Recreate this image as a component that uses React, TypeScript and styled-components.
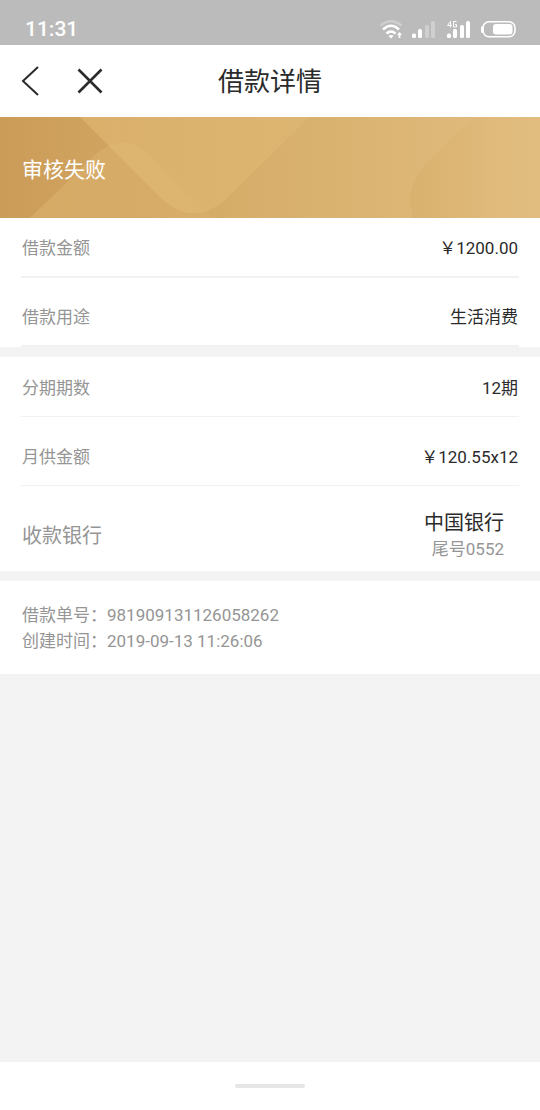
import React from 'react';
import styled, { createGlobalStyle } from 'styled-components';

const GlobalStyle = createGlobalStyle`
  * { box-sizing: border-box; }
  html, body, #root { height: 100%; }
  body {
    margin: 0;
    background: #f3f3f3;
    color: #2b2b2b;
    font-family: Roboto, "Noto Sans CJK SC", sans-serif;
    font-size: 17px;
    font-weight: 380;
    line-height: 26px;
  }
`;

const Screen = styled.div`
  min-height: 100%;
  display: flex;
  flex-direction: column;
`;

const StatusBar = styled.div`
  display: flex;
  align-items: center;
  justify-content: space-between;
  height: 45px;
  padding: 12px 24px 0 25px;
  background: #bbb;
  color: #fff;
  font-size: 21px;
  font-weight: 500;
`;

const StatusIcons = styled.svg`
  display: block;
`;

const NavBar = styled.header`
  display: grid;
  grid-template-columns: 1fr auto 1fr;
  align-items: center;
  height: 72px;
  padding: 0 14px;
  background: #fff;
`;

const NavActions = styled.div`
  display: flex;
  gap: 28px;
`;

const IconButton = styled.button`
  display: flex;
  padding: 0;
  border: 0;
  background: none;
  color: #2b2b2b;
  cursor: pointer;
`;

const Title = styled.h1`
  margin: 0;
  padding-top: 2px;
  font-size: 26px;
  line-height: 36px;
  font-weight: 380;
`;

const Banner = styled.section`
  display: grid;
  align-items: center;
  height: 101px;
  background: linear-gradient(90deg, #cb9c58, #d8af6c 50%, #e1bd7f);
`;

const BannerArt = styled.svg`
  grid-area: 1 / 1;
  width: 100%;
  height: 101px;
`;

const BannerText = styled.p`
  grid-area: 1 / 1;
  z-index: 1;
  margin: 0;
  padding: 4px 22px 0;
  color: #fff;
  font-size: 21px;
`;

const Details = styled.dl`
  margin: 0 0 10px;
  padding: 0 21px;
  background: #fff;
`;

const Row = styled.div<{ $rule: number }>`
  display: flex;
  align-items: center;
  justify-content: space-between;
  height: 60px;
  padding: 2px 1px 0;
  border-bottom: ${(p) => p.$rule}px solid #f1f1f1;

  & + & { margin-top: 9px; }
`;

const BankRow = styled.div`
  display: flex;
  align-items: center;
  justify-content: space-between;
  height: 85px;
  padding: 14px 15px 0 1px;
  font-size: 20px;
`;

const Label = styled.dt`
  color: #959595;
`;

const Value = styled.dd`
  margin: 0;
  text-align: right;
`;

const CardTail = styled.small`
  display: block;
  color: #959595;
  font-size: 17px;
`;

const OrderInfo = styled.section`
  padding: 21px 22px 20px;
  background: #fff;
  color: #959595;
`;

const InfoLine = styled.p`
  margin: 0;
`;

const GestureBar = styled.div`
  display: flex;
  align-items: center;
  justify-content: center;
  height: 48px;
  margin-top: auto;
  background: #fff;
`;

const Handle = styled.span`
  width: 70px;
  height: 4px;
  border-radius: 2px;
  background: #e6e6e6;
`;

export default function App() {
  return (
    <Screen>
      <GlobalStyle />
      <StatusBar>
        <span>11:31</span>
        <StatusIcons width="136" height="22" viewBox="380 17 136 22" fill="#fff" aria-hidden="true">
          <g fill="none" stroke="#fff" strokeWidth="2.4">
            <path d="M380.500 24.500Q391 16 401.500 24.500" opacity=".3" />
            <path d="M383 28.500Q391 21 399 28.500" />
            <path d="M386.500 32.500Q391 28.500 395.500 32.500" />
          </g>
          <path d="M388.500 35Q391 33 393.500 35L391 37.500Z" />
          <path d="M399.500 31l2.500 3h-1.600v3h-1.800v-3h-1.600z" />
          <rect x="412" y="32.500" width="4" height="4.500" rx="1.500" />
          <rect x="418" y="28" width="4" height="9" rx="1.500" />
          <g opacity=".3">
            <rect x="425" y="24" width="4" height="13" rx="1.500" />
            <rect x="431" y="20" width="4" height="17" rx="1.500" />
          </g>
          <g fill="none" stroke="#fff" strokeWidth="1">
            <path d="M450.500 26.500V20.500L447.500 24.500H452" />
            <path d="M456.500 20.500h-3v5.500h3v-2.500h-1.500" />
          </g>
          <rect x="447" y="32.500" width="4" height="4.500" rx="1.500" />
          <rect x="453" y="28" width="4" height="9" rx="1.500" />
          <rect x="460" y="24" width="4" height="13" rx="1.500" />
          <rect x="466" y="20" width="4" height="17" rx="1.500" />
          <rect x="483" y="20.800" width="32" height="15" rx="6" fill="none" stroke="#fff" strokeWidth="1.600" />
          <rect x="481" y="25" width="3" height="7" rx="1.500" />
          <rect x="493" y="23" width="19.500" height="10.500" rx="3" />
        </StatusIcons>
      </StatusBar>

      <NavBar>
        <NavActions>
          <IconButton type="button" aria-label="返回">
            <svg width="32" height="32" viewBox="0 0 32 32" fill="none" stroke="currentColor" strokeWidth="2">
              <path d="M24 2L9 16L24 30" />
            </svg>
          </IconButton>
          <IconButton type="button" aria-label="关闭">
            <svg width="32" height="32" viewBox="0 0 32 32" fill="none" stroke="currentColor" strokeWidth="2.600">
              <path d="M4.500 4.500L27.500 27.500M27.500 4.500L4.500 27.500" />
            </svg>
          </IconButton>
        </NavActions>
        <Title>借款详情</Title>
      </NavBar>

      <main>
        <Banner>
          <BannerArt viewBox="0 0 540 101" preserveAspectRatio="none" aria-hidden="true">
            <defs>
              <linearGradient id="fold" x1="0" x2="1">
                <stop offset="0" stopColor="#d3a45c" stopOpacity=".3" />
                <stop offset="1" stopColor="#d3a45c" stopOpacity="0" />
              </linearGradient>
              <linearGradient id="sheet" x1="0" x2="1">
                <stop offset="0" stopColor="#e8c27c" stopOpacity=".45" />
                <stop offset="1" stopColor="#e8c27c" stopOpacity=".25" />
              </linearGradient>
              <linearGradient id="crest" x1="0" x2="1">
                <stop offset="0" stopColor="#e8c27c" stopOpacity=".35" />
                <stop offset="1" stopColor="#e8c27c" stopOpacity=".1" />
              </linearGradient>
            </defs>
            <path fill="url(#sheet)" d="M80 0H309L226 82Q194 111 162 82Z" />
            <path fill="url(#crest)" d="M30 101L97 36Q125 14 150 38L213 101Z" />
            <path fill="url(#fold)" d="M474 0L424 49Q404 70 413 101H500V0Z" />
          </BannerArt>
          <BannerText>审核失败</BannerText>
        </Banner>

        <Details>
          <Row $rule={2}>
            <Label>借款金额</Label>
            <Value>￥1200.00</Value>
          </Row>
          <Row $rule={2}>
            <Label>借款用途</Label>
            <Value>生活消费</Value>
          </Row>
        </Details>

        <Details>
          <Row $rule={1}>
            <Label>分期期数</Label>
            <Value>12期</Value>
          </Row>
          <Row $rule={1}>
            <Label>月供金额</Label>
            <Value>￥120.55x12</Value>
          </Row>
          <BankRow>
            <Label>收款银行</Label>
            <Value>
              中国银行
              <CardTail>尾号0552</CardTail>
            </Value>
          </BankRow>
        </Details>

        <OrderInfo>
          <InfoLine>借款单号：981909131126058262</InfoLine>
          <InfoLine>创建时间：2019-09-13 11:26:06</InfoLine>
        </OrderInfo>
      </main>

      <GestureBar>
        <Handle />
      </GestureBar>
    </Screen>
  );
}
